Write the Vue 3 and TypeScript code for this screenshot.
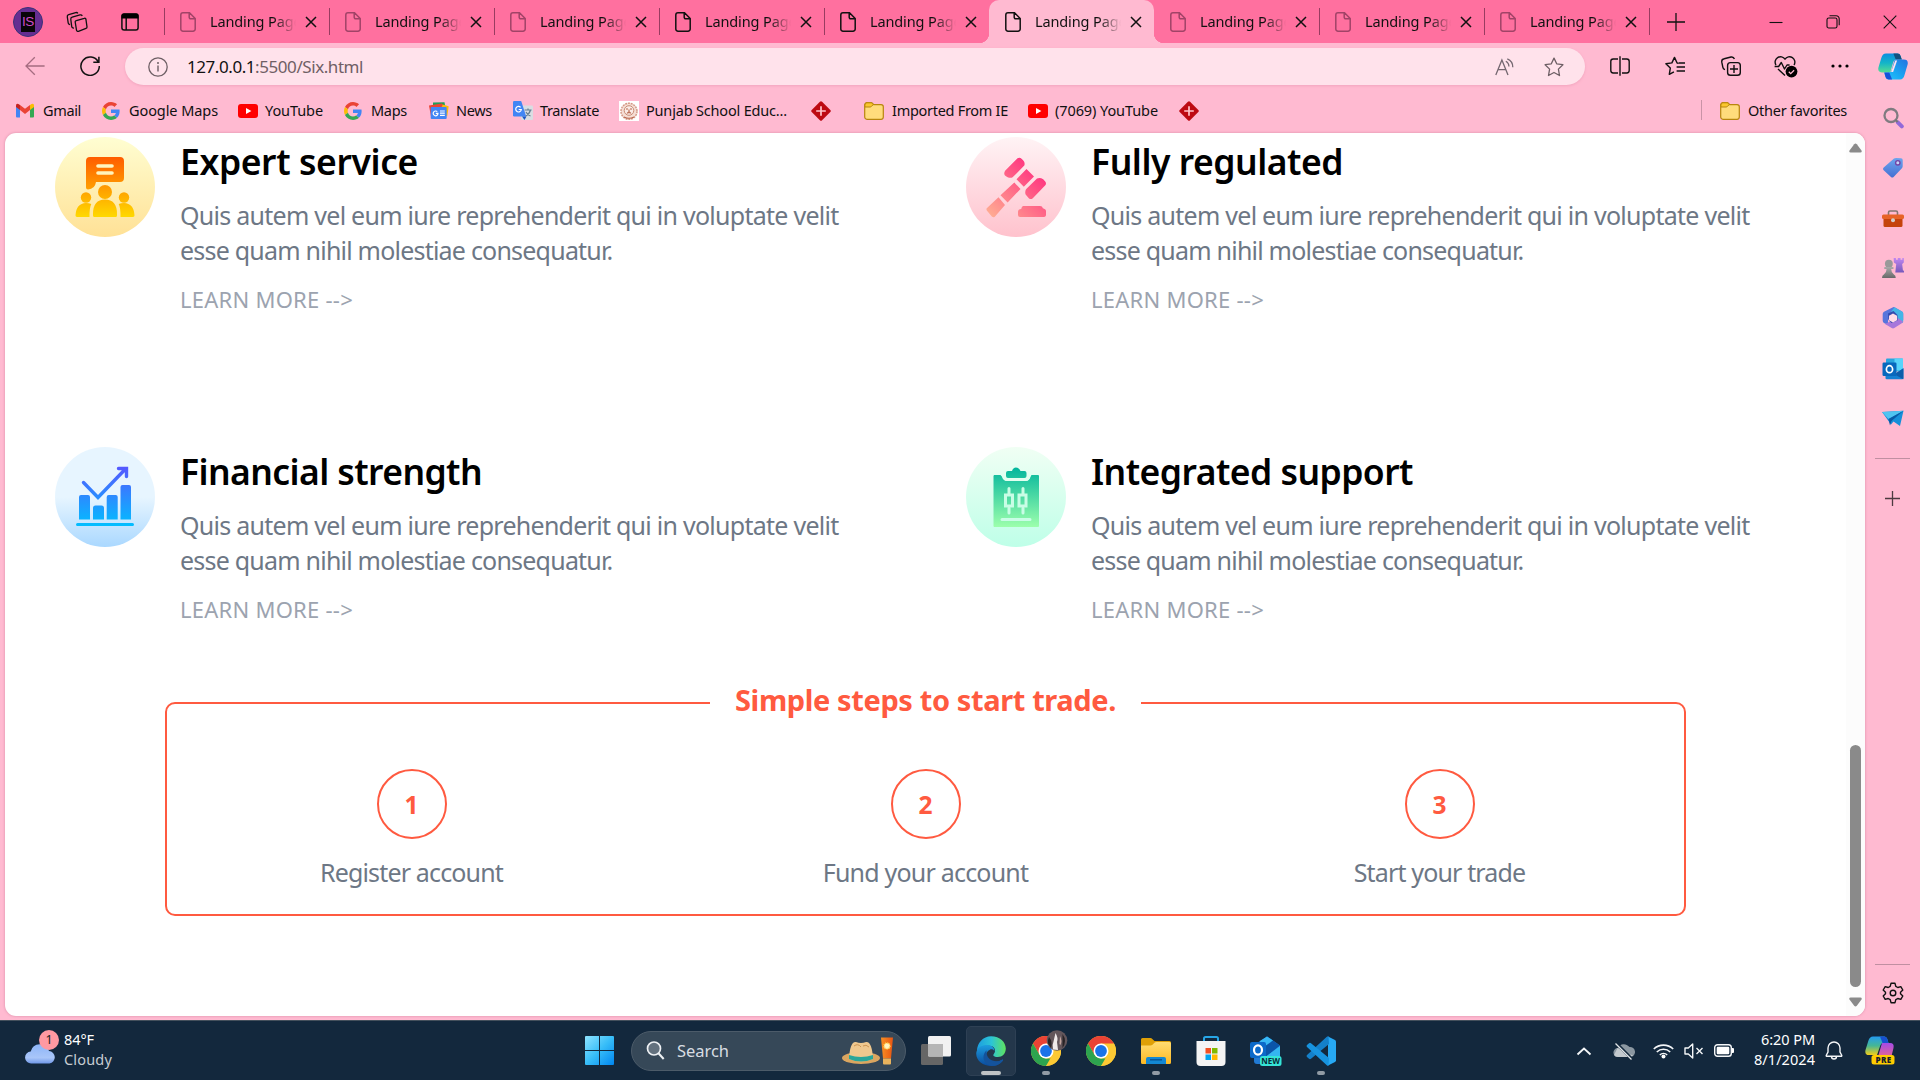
<script setup lang="ts">
import type { Directive } from 'vue'

interface Tab {
  active?: boolean
  loaded?: boolean
  divider: boolean
}
interface Bookmark {
  icon: string
  label: string
  slot: number
  text: number
}
interface Feature {
  icon: string
  title: string
  width: number
}
interface Step {
  label: string
  width: number
}
interface TaskApp {
  icon: string
  state: 'idle' | 'running' | 'focused'
}

// Tracks a single line of text so that it fills the given width in pixels.
const vFit: Directive<HTMLElement, number> = {
  mounted(el, { value }) {
    if (!value) return
    const range = document.createRange()
    range.selectNodeContents(el)
    const natural = range.getBoundingClientRect().width
    const count = (el.textContent ?? '').trim().length
    if (count > 1) el.style.letterSpacing = `${(value - natural) / count}px`
  },
}

const tabs: Tab[] = [
  { divider: true },
  { divider: true },
  { divider: true },
  { divider: true, loaded: true },
  { divider: true, loaded: true },
  { divider: false, loaded: true, active: true },
  { divider: false },
  { divider: true },
  { divider: true },
]

const bookmarks: Bookmark[] = [
  { icon: 'gmail', label: 'Gmail', slot: 86, text: 38 },
  { icon: 'google', label: 'Google Maps', slot: 136, text: 89 },
  { icon: 'youtube', label: 'YouTube', slot: 106, text: 58 },
  { icon: 'google', label: 'Maps', slot: 85, text: 36 },
  { icon: 'news', label: 'News', slot: 84, text: 36 },
  { icon: 'translate', label: 'Translate', slot: 106, text: 59 },
  { icon: 'school', label: 'Punjab School Educ...', slot: 192, text: 141 },
  { icon: 'diamond', label: '', slot: 53, text: 0 },
  { icon: 'folder', label: 'Imported From IE', slot: 164, text: 116 },
  { icon: 'youtube', label: '(7069) YouTube', slot: 151, text: 103 },
  { icon: 'diamond', label: '', slot: 20, text: 0 },
]

const features: Feature[] = [
  { icon: 'f-expert', title: 'Expert service', width: 238 },
  { icon: 'f-regulated', title: 'Fully regulated', width: 252 },
  { icon: 'f-financial', title: 'Financial strength', width: 302 },
  { icon: 'f-support', title: 'Integrated support', width: 322 },
]

const steps: Step[] = [
  { label: 'Register account', width: 183 },
  { label: 'Fund your account', width: 205.5 },
  { label: 'Start your trade', width: 171.5 },
]

const tools = ['split', 'favorites', 'collections', 'heart', 'dots']
const sideApps = ['s-search', 's-tag', 's-toolbox', 's-chess', 's-m365', 's-outlook', 's-send']

const apps: TaskApp[] = [
  { icon: 't-view', state: 'idle' },
  { icon: 't-edge', state: 'focused' },
  { icon: 't-chromeuser', state: 'running' },
  { icon: 't-chrome', state: 'idle' },
  { icon: 't-files', state: 'running' },
  { icon: 't-store', state: 'idle' },
  { icon: 't-outlook', state: 'idle' },
  { icon: 't-code', state: 'running' },
]
</script>

<template>
  <div class="screen">
    <svg class="sprite" width="0" height="0" aria-hidden="true">
      <defs>
        <linearGradient id="gExpBg" x1="0" y1="0" x2="0" y2="1"><stop offset="0" stop-color="#fffed2" /><stop offset="1" stop-color="#ffe196" /></linearGradient>
        <linearGradient id="gExp" gradientUnits="userSpaceOnUse" x1="0" y1="20" x2="0" y2="80"><stop offset="0" stop-color="#ff5c00" /><stop offset="1" stop-color="#ffd900" /></linearGradient>
        <linearGradient id="gRegBg" x1="0" y1="0" x2="0" y2="1"><stop offset="0" stop-color="#fff3f5" /><stop offset="1" stop-color="#ffc2cd" /></linearGradient>
        <linearGradient id="gReg" gradientUnits="userSpaceOnUse" x1="24" y1="80" x2="68" y2="34"><stop offset="0" stop-color="#ffae93" /><stop offset="1" stop-color="#ff3a80" /></linearGradient>
        <linearGradient id="gFinBg" x1="0" y1="0" x2="0" y2="1"><stop offset=".5" stop-color="#e7f5ff" /><stop offset="1" stop-color="#aad8ff" /></linearGradient>
        <linearGradient id="gFin" gradientUnits="userSpaceOnUse" x1="0" y1="20" x2="0" y2="80"><stop offset="0" stop-color="#5558ff" /><stop offset="1" stop-color="#00c0ff" /></linearGradient>
        <linearGradient id="gSupBg" x1="0" y1="0" x2="0" y2="1"><stop offset="0" stop-color="#f0fff4" /><stop offset="1" stop-color="#beffe8" /></linearGradient>
        <linearGradient id="gSup" gradientUnits="userSpaceOnUse" x1="0" y1="20" x2="0" y2="80"><stop offset="0" stop-color="#00b59c" /><stop offset="1" stop-color="#9cffac" /></linearGradient>
        <linearGradient id="gWin" x1="0" y1="0" x2="1" y2="1"><stop offset="0" stop-color="#8fe4ff" /><stop offset=".5" stop-color="#37bdf8" /><stop offset="1" stop-color="#0086f0" /></linearGradient>
        <linearGradient id="gEdgeA" x1="0" y1="0" x2="1" y2="0"><stop offset="0" stop-color="#1c9de0" /><stop offset=".5" stop-color="#2cc4d6" /><stop offset="1" stop-color="#5fe35e" /></linearGradient>
        <linearGradient id="gEdgeB" x1="0" y1="0" x2="0" y2="1"><stop offset="0" stop-color="#1d9de0" /><stop offset="1" stop-color="#0a4a9c" /></linearGradient>
        <linearGradient id="gFolder" x1="0" y1="0" x2="0" y2="1"><stop offset="0" stop-color="#ffdc72" /><stop offset="1" stop-color="#fdb922" /></linearGradient>
        <linearGradient id="gCloud" x1="0" y1="0" x2="0" y2="1"><stop offset="0" stop-color="#8db5f8" /><stop offset=".7" stop-color="#a9c6f9" /><stop offset="1" stop-color="#6f97e8" /></linearGradient>
        <linearGradient id="gCopA" x1="0" y1="0" x2="0" y2="1"><stop offset="0" stop-color="#0a8fe0" /><stop offset=".5" stop-color="#14b5c8" /><stop offset="1" stop-color="#55dd92" /></linearGradient>
        <linearGradient id="gCopB" x1="1" y1="0" x2="0" y2="1"><stop offset="0" stop-color="#2672e0" /><stop offset=".6" stop-color="#18aaf4" /><stop offset="1" stop-color="#2bc4fa" /></linearGradient>
        <linearGradient id="gPreA" x1="0" y1="0" x2="0" y2="1"><stop offset="0" stop-color="#249cf0" /><stop offset=".5" stop-color="#45b795" /><stop offset="1" stop-color="#f2cd19" /></linearGradient>
        <linearGradient id="gPreB" x1="0" y1="0" x2="0" y2="1"><stop offset="0" stop-color="#a44be8" /><stop offset="1" stop-color="#f26a80" /></linearGradient>
        <linearGradient id="gTag" x1="0" y1="0" x2="0" y2="1"><stop offset="0" stop-color="#6da5ee" /><stop offset="1" stop-color="#456fd2" /></linearGradient>
        <linearGradient id="gPurple" x1="0" y1="0" x2="0" y2="1"><stop offset="0" stop-color="#c187f2" /><stop offset="1" stop-color="#7658bb" /></linearGradient>
        <linearGradient id="gGray" x1="0" y1="0" x2="0" y2="1"><stop offset="0" stop-color="#aaa" /><stop offset="1" stop-color="#686868" /></linearGradient>
        <linearGradient id="gSun" x1="0" y1="0" x2="1" y2="0"><stop offset="0" stop-color="#f89024" /><stop offset="1" stop-color="#e85512" /></linearGradient>
      </defs>

      <symbol id="page" viewBox="0 0 16 20"><path d="M3 .8h6.500l5.700 5.700V17A2.200 2.200 0 0 1 13 19.200H3A2.200 2.200 0 0 1 .8 17V3A2.200 2.200 0 0 1 3 .8ZM9.200 1v4.300a1.500 1.500 0 0 0 1.500 1.500H15" fill="none" stroke="currentColor" stroke-width="1.500" /></symbol>
      <symbol id="close" viewBox="0 0 12 12"><path d="m1 1 10 10M11 1 1 11" stroke="currentColor" stroke-width="1.500" /></symbol>
      <symbol id="workspaces" viewBox="0 0 22 22"><g fill="none" stroke="currentColor" stroke-width="1.300" stroke-linejoin="round"><path d="m10.300 8.600 8-2.300a1.200 1.200 0 0 1 1.600.9l1.100 7.600a1.500 1.500 0 0 1-1 1.600l-7.600 2.900a1.400 1.400 0 0 1-1.900-1.100L9.200 10a1.200 1.200 0 0 1 1.100-1.400Z" transform="translate(0 1)" /><path d="m7.800 17.300-.9-.4a2 2 0 0 1-1.200-1.600L4.800 8.500a2 2 0 0 1 1.400-2.300L14 3.900a2 2 0 0 1 2.300 1" /><path d="m4 13.700-.6-.3a2 2 0 0 1-1.200-1.600L1.300 6a2 2 0 0 1 1.400-2.300l7-2.100a2 2 0 0 1 2.200.8" /></g></symbol>
      <symbol id="tabmenu" viewBox="0 0 18 18"><path d="M3.200.9h11.600a2.300 2.300 0 0 1 2.300 2.300v11.600a2.300 2.300 0 0 1-2.300 2.300H3.200A2.300 2.300 0 0 1 .9 14.800V3.200A2.300 2.300 0 0 1 3.200.9ZM5.200 5v12" fill="none" stroke="#111" stroke-width="1.500" /><path d="M.5 5.500v-3a2 2 0 0 1 2-2h13a2 2 0 0 1 2 2v3z" /></symbol>
      <symbol id="back" viewBox="0 0 20 20"><path d="M19.600 10H1M9.800 1.200 1 10l8.800 8.800" fill="none" stroke="#a56c80" stroke-width="1.300" /></symbol>
      <symbol id="refresh" viewBox="0 0 20 20"><path d="M18.200 5.800A9.200 9.200 0 1 0 19.300 10M18.900.8v5.400h-5.600" fill="none" stroke="#111" stroke-width="1.500" /></symbol>
      <symbol id="info" viewBox="0 0 20 20"><circle cx="10" cy="10" r="9.200" fill="none" stroke="#6e5f65" stroke-width="1.300" /><path d="M10 8.600v6" stroke="#6e5f65" stroke-width="1.400" /><circle cx="10" cy="6" r="1" fill="#6e5f65" /></symbol>
      <symbol id="aloud" viewBox="0 0 20 18"><path d="M.8 17 6.900 2 13 17M3 11.600h7.800M10.800 3.200a6 6 0 0 1 3.100 5.400M12.300.8a9 9 0 0 1 5.500 8.400" fill="none" stroke="#746770" stroke-width="1.300" /></symbol>
      <symbol id="star" viewBox="0 0 20 20"><path d="m10 1.100 2.700 5.700 6.200.9-4.500 4.400 1.100 6.400-5.500-3-5.500 3 1.100-6.400L1.100 7.700l6.200-.9z" fill="none" stroke="#6e5f65" stroke-width="1.300" stroke-linejoin="round" /></symbol>
      <symbol id="split" viewBox="0 0 20 20"><path d="M8 3H3.200A2.400 2.400 0 0 0 .8 5.400v9.200A2.400 2.400 0 0 0 3.200 17H8M12 3h4.800a2.400 2.400 0 0 1 2.400 2.400v9.200a2.400 2.400 0 0 1-2.400 2.400H12M10 .3v19.400" fill="none" stroke="#111" stroke-width="1.400" /></symbol>
      <symbol id="favorites" viewBox="0 0 20 20"><path d="m13.800 7.300-1.700-.3L9.500 1.400 6.900 6.900.9 7.800l4.400 4.300-1 6.300 4.600-2.600M11.600 11H20M14 7H20M11.600 15H20" fill="none" stroke="#111" stroke-width="1.400" stroke-linejoin="round" /></symbol>
      <symbol id="collections" viewBox="0 0 20 20"><path d="M4 13.600a3 3 0 0 1-2.200-2.500L.8 6.200a3 3 0 0 1 2.400-3.400L10 1a3 3 0 0 1 3.400 2" fill="none" stroke="#111" stroke-width="1.400" /><rect x="6.600" y="6.600" width="12.700" height="12.700" rx="2.800" fill="none" stroke="#111" stroke-width="1.400" /><path d="M13 9v8M9 13h8" stroke="#111" stroke-width="1.400" /></symbol>
      <symbol id="heart" viewBox="0 0 24 22"><path d="M2 9a5.200 5.200 0 0 1 9-5.800A5.200 5.200 0 0 1 20 9M.6 10.500h4l2.700-4 3.200 6.500 2.500-4h2.600M4 13l7 6.500" fill="none" stroke="#111" stroke-width="1.400" stroke-linejoin="round" /><circle cx="17.500" cy="15.600" r="5.900" /><path d="m14.800 15.800 1.900 1.800 3.400-3.400" fill="none" stroke="#ffbad1" stroke-width="1.300" /></symbol>
      <symbol id="dots" viewBox="0 0 20 20"><circle cx="3" cy="10" r="1.600" /><circle cx="10" cy="10" r="1.600" /><circle cx="17" cy="10" r="1.600" /></symbol>
      <symbol id="copilot" viewBox="0 0 30 27"><path d="M8 .6h11.600q2.200 0 3 2.400l1.200 3.600H18q-2 0-2.800 2.700l-3 10.100H4.500Q-.8 19.400.5 14.200L3.300 5Q4.600.6 8 .6Z" fill="url(#gCopA)" /><path d="M15.400.6h4.200q2.200 0 3 2.400l1.200 3.600h-6.100z" fill="#12517e" /><path d="M22 26.500H10.600q-2.400 0-3.100-2.500l-1.200-4.600h4.200q2.400 0 3.200-2.500l3-10.300h9q5 0 3.900 5l-3 10.100q-1.100 4.800-4.600 4.800Z" fill="url(#gCopB)" /><path d="M6.300 19.400h5l2.800 7H10.600q-2.400 0-3.100-2.400z" fill="#1453d9" /><path d="M17.300 7.600h1.800l-4 11.300h-2z" fill="#ffe2ee" /></symbol>

      <symbol id="gmail" viewBox="0 0 18 14"><path d="M0 2v11q0 1 1 1h3V5z" fill="#4285f4" /><path d="M18 2v11q0 1-1 1h-3V5z" fill="#34a853" /><path d="M14 1.500v5l4-3V2q0-3-4-.5z" fill="#fbbc04" /><path d="M4 1.500v5l-4-3V2q0-3 4-.5z" fill="#c5221f" /><path d="M4 1.600 9 5.300l5-3.700v5l-5 3.800-5-3.800z" fill="#ea4335" /></symbol>
      <symbol id="google" viewBox="0 0 48 48"><path fill="#EA4335" d="M24 9.500c3.540 0 6.710 1.220 9.210 3.600l6.850-6.850C35.900 2.380 30.470 0 24 0 14.620 0 6.510 5.380 2.560 13.220l7.980 6.190C12.430 13.720 17.740 9.500 24 9.500z" /><path fill="#4285F4" d="M46.980 24.550c0-1.570-.15-3.090-.38-4.550H24v9.020h12.940c-.58 2.960-2.260 5.480-4.780 7.180l7.730 6c4.510-4.180 7.090-10.360 7.090-17.650z" /><path fill="#FBBC05" d="M10.530 28.590c-.48-1.450-.76-2.990-.76-4.590s.27-3.140.76-4.590l-7.980-6.190C.92 16.460 0 20.120 0 24c0 3.880.92 7.540 2.560 10.780l7.970-6.190z" /><path fill="#34A853" d="M24 48c6.480 0 11.930-2.130 15.890-5.810l-7.730-6c-2.150 1.450-4.920 2.300-8.160 2.300-6.260 0-11.570-4.220-13.470-9.910l-7.980 6.190C6.510 42.620 14.620 48 24 48z" /></symbol>
      <symbol id="youtube" viewBox="0 0 20 14"><rect width="20" height="14" rx="3" fill="#f00" /><path d="m8 4 5.400 3L8 10z" fill="#fff" /></symbol>
      <symbol id="news" viewBox="0 0 20 17"><path d="m4 .5 11.500-.3 1 6H4z" fill="#1e9e58" /><path d="m0 3.500 13-2 4 5-15 8z" fill="#ea4335" /><path d="m19.700 4.200-6-1.700-2 5 6.500 7z" fill="#fbbc04" /><rect x="1.700" y="5" width="16" height="12" rx="1" fill="#4285f4" /><path d="M8.300 9.700A2.400 2.400 0 1 0 9 11.300H6.800M11 9h4.800M11 11.200h4.800M11 13.400h4.800" fill="none" stroke="#fff" stroke-width="1.200" /></symbol>
      <symbol id="translate" viewBox="0 0 20 20"><rect x="8" y="4.500" width="12" height="14.500" rx="1.200" fill="#d9dde2" /><path d="M11.600 9h7M15 7.400V9M17.500 9q-1 4-5 6M13 11q1.500 3 4.500 4" fill="none" stroke="#657f92" stroke-width="1.200" /><path d="M1.200 0h7l5 15.500h-12Q0 15.500 0 14.300V1.200Q0 0 1.200 0Z" fill="#4285f4" /><path d="M9 15.500h4.500l-2 3.500z" fill="#1a56c4" /><path d="M7.600 6.300A2.800 2.800 0 1 0 8.300 8.500H5.700" fill="none" stroke="#fff" stroke-width="1.200" /></symbol>
      <symbol id="school" viewBox="0 0 20 20"><path d="M0 0h20v20H0z" fill="#fff" /><circle cx="10" cy="10.300" r="8" fill="#f5ded5" stroke="#d49a87" stroke-width="1.500" stroke-dasharray="2 .8" /><circle cx="10" cy="9.500" r="4.800" fill="#faece7" stroke="#c98c75" /><path d="M7 8h2M11 8h2M8 12.500q2-3 4 0M10 8.500v4M5 16q5 2.500 10 0" fill="none" stroke="#b8674d" stroke-width="1.100" /></symbol>
      <symbol id="diamond" viewBox="0 0 20 20"><path d="M8.900.7q1.100-1 2.200 0l8.200 8.200q1 1.100 0 2.200l-8.200 8.200q-1.100 1-2.200 0L.7 11.100q-1-1.100 0-2.200z" fill="#bd0a12" /><path d="M10 5.200v9.600M5.200 10h9.600" stroke="#ffc5cb" stroke-width="1.700" /></symbol>
      <symbol id="folder" viewBox="0 0 20 18"><path d="M.7 3A2.200 2.200 0 0 1 2.900.7h4q1 0 1.700.8l1 1.100h7.500a2.200 2.200 0 0 1 2.200 2.200v10.300a2.200 2.200 0 0 1-2.200 2.200H2.900a2.200 2.200 0 0 1-2.200-2.200z" fill="#ffdc7c" stroke="#b8860e" stroke-width="1.200" /><path d="M.9 3.100Q1 .9 2.900.8h4q1 0 1.600.8l.8 1-1.600 1.500Q7 5 6 5H1z" fill="#fbc72e" stroke="#b8860e" /></symbol>

      <symbol id="f-expert" viewBox="0 0 100 100"><circle cx="50" cy="50" r="50" fill="url(#gExpBg)" /><g fill="url(#gExp)"><path fill-rule="evenodd" d="M35 20h30a4 4 0 0 1 4 4v17a4 4 0 0 1-4 4H41q-1 7-8 7.500-2 0-2-2V24a4 4 0 0 1 4-4Zm8 7.200a1.700 1.700 0 0 0 0 3.600h14a1.700 1.700 0 0 0 0-3.600zm0 7a1.700 1.700 0 0 0 0 3.600h14a1.700 1.700 0 0 0 0-3.600z" /><circle cx="50" cy="55" r="7" /><circle cx="31" cy="60.500" r="5.200" /><circle cx="69" cy="60.500" r="5.200" /><path d="M38 77q0-14.500 12-14.500T62 77v1.500q0 1.500-1.500 1.500h-21q-1.500 0-1.500-1.500zM36.300 67q-2 4-1.800 13H22q-1.600 0-1.500-1.800Q21.200 66.500 31 66q3 0 5.300 1zM63.700 67q2 4 1.800 13H78q1.600 0 1.500-1.800Q78.800 66.500 69 66q-3 0-5.300 1z" /></g></symbol>
      <symbol id="f-regulated" viewBox="0 0 100 100"><circle cx="50" cy="50" r="50" fill="url(#gRegBg)" /><g fill="url(#gReg)"><path d="m51.500 21.300-12.200 12.200q-2.300 3.500.3 5.500l2 1.300q3 1 5 0l11.700-11.700q1-3-1-5l-1.500-1.700q-2-2-4.300-.6zM60.500 32l-10 10.200 7.300 7.600L68 39.500zM71 41.500 60 52.300q-1.300 2.700-.4 5.300l3.200 3.600q2 1.800 4 0l12.500-13q1.500-2-.3-4l-1.800-2q-3.200-2-6.200-.7zM48.300 45.500 34.500 58.200 41.600 65.500 54.500 52zM32.500 60.300 21 71q-1 1-.2 2.500l5 6q1.500 1.400 3 .2L39 68zM57 69h17q3 .2 2.500 2l2.500 1.300q1 .6 1 2v4Q79.700 80 78 80H54q-2 0-2-2v-3q0-3 3.200-3 .5-2.500 1.800-3z" /></g></symbol>
      <symbol id="f-financial" viewBox="0 0 100 100"><circle cx="50" cy="50" r="50" fill="url(#gFinBg)" /><path d="M28.500 35.500 43 50.500l26-27M63.500 21.500h8v8" fill="none" stroke="url(#gFin)" stroke-width="3.400" stroke-linecap="round" /><path d="M24 50q0-2 2-2h7q2 0 2 2v22.500H24zM38 61q0-2.500 2.500-2.500h6Q49 58.500 49 61v11.500H38zM51.700 50q0-2 2-2h7q2 0 2 2v22.500h-11zM65.500 40q0-2 2-2h6.500q2 0 2 2v32.500H65.500zM22.500 76h55a1.500 1.500 0 0 1 0 3h-55a1.500 1.500 0 0 1 0-3z" fill="url(#gFin)" /></symbol>
      <symbol id="f-support" viewBox="0 0 100 100"><circle cx="50" cy="50" r="50" fill="url(#gSupBg)" /><path d="M28 28h6.500l3 3.500q1 2.500 4 2.500h18q3 0 4-2.500l2-3.500H72q1 0 1 1v50q0 1-1 1H28.500q-1 0-1-1V29z" fill="url(#gSup)" /><path d="M37.500 27v1q0 4.500 4 4.500h17.500q4 0 4-4.500v-1" fill="none" stroke="#e2fff0" stroke-width="3" /><path d="M40 26q0-2 2-2h4q1-3.500 4-3.500t4.500 3.500h4q2 0 2 2v3q0 2-2 2H42q-2 0-2-2z" fill="url(#gSup)" /><g fill="none" stroke="#c9fde6" stroke-width="3"><path d="M43 41.500v6M43 61v5M57 41.500v6M57 61v5M36 72.500h28" stroke-linecap="round" /><path d="M39.500 48h7v11h-7zM53 48h7v11h-7z" /></g></symbol>

      <symbol id="s-search" viewBox="0 0 22 22"><circle cx="9" cy="8.500" r="6.500" fill="none" stroke="#807b80" stroke-width="2.300" /><path d="m15.800 15.300 4 4" stroke="#9269d8" stroke-width="4" stroke-linecap="round" /><path d="m13.600 13 2 2" stroke="#777" stroke-width="2" /></symbol>
      <symbol id="s-tag" viewBox="0 0 22 22"><path d="M12 1.600q1-.7 2-.7l5 .3q1.700.2 1.700 1.800v6q0 1.300-.8 2.200l-8.300 8.800q-1.300 1.200-2.600 0L1.400 13q-1-1.300.3-2.500z" fill="url(#gTag)" /><circle cx="15.800" cy="5.800" r="2.200" fill="#c3d5f5" stroke="#7443a5" stroke-width="1.400" /></symbol>
      <symbol id="s-toolbox" viewBox="0 0 22 20"><path d="M6.500 7V4.500Q6.500 3 8 3h6q1.500 0 1.500 1.500V7" fill="none" stroke="#83766f" stroke-width="1.600" /><path d="M1.500 9.500h19v8q0 1.500-1.500 1.500H3q-1.500 0-1.500-1.500z" fill="#c5430c" /><path d="M1.500 6.500h19q1.500 0 1.500 1.500v1.500q0 1.500-1.500 1.500h-19Q0 11 0 9.500V8q0-1.500 1.500-1.500z" fill="#e76327" /><circle cx="11" cy="12.300" r="2" fill="#d3ceca" /></symbol>
      <symbol id="s-chess" viewBox="0 0 24 24"><path d="M12.700 1h2.500v2h2V1h3v2h2V1h1.600v5l-1.800 1.500.8 7q1.500.5 1.500 2.500H14.500l1-9.500L13 6z" fill="url(#gPurple)" /><circle cx="7.500" cy="7.300" r="4.300" fill="#999" /><path d="M2.500 11h10v2.200H10q0 4 3 6 2 .7 2 3.800H0q0-3.100 2-3.800 3-2 3-6H2.500z" fill="url(#gGray)" /></symbol>
      <symbol id="s-m365" viewBox="0 0 22 22"><path d="M10.500.4q1.300-.6 2.500 0l7 4q1.200.7 1.200 2v6.500L13 8 6 12.500V18l-4-2q-1.300-.8-1.300-2.500V7q0-1.500 1.300-2.300z" fill="#5875dc" /><path d="m12.500.2 7.500 4.200q1.200.7 1.200 2v8q0 1-1 1.700l-5-3V9L8.500 5.500z" fill="#44b5e6" /><path d="M21 14.500q-.2 1-1.200 1.700l-7.500 4.800q-1.300.8-2.600 0L3 17l3-1.500 9-5z" fill="#a677db" /><path d="M6 6.500 11.500 4l4 4v5.500l-6 2.500-3-3z" fill="#344bae" /><path d="m11 6.500 4 2.200v4.600l-4 2.200-4-2.200V8.700z" fill="#ffdce8" /></symbol>
      <symbol id="s-outlook" viewBox="0 0 22 22"><path d="M4 1.500Q4 .5 5 .5h15q1 0 1 1v12H4z" fill="#29a6df" /><path d="M12.500.5H21v12h-8.500z" fill="#57d4fb" /><path d="M3.500 10 13 16l8.500-6v10q0 1.300-1.300 1.300H4.800q-1.300 0-1.300-1.300z" fill="#1580d2" /><path d="m21.300 10.500-9 5.700 9 5z" fill="#0d5daa" /><rect x=".5" y="4.500" width="14" height="13.500" rx="1.200" fill="#0868bd" /><ellipse cx="7.500" cy="11.200" rx="3.100" ry="3.500" fill="none" stroke="#fff" stroke-width="1.700" /></symbol>
      <symbol id="s-send" viewBox="0 0 22 17"><path d="M0 1.500 21.500.3 18 15.500 11.500 11 9 14z" fill="#168fd9" /><path d="M0 1.500 21.500.3 6.500 8.500z" fill="#50c4f1" /><path d="M6.500 8.500 21.500.3 9.500 10.500 8 15z" fill="#085aa6" /></symbol>
      <symbol id="gear" viewBox="0 0 22 22"><path d="M9 1.300h4l.8 3.100 2 1.100 3-.9 2 3.400-2.300 2.200v1.600l2.300 2.200-2 3.400-3-.9-2 1.100-.8 3.100H9l-.8-3.100-2-1.100-3 .9-2-3.400 2.300-2.200v-1.600L1.200 8l2-3.400 3 .9 2-1.100z" fill="none" stroke="#111" stroke-width="1.400" stroke-linejoin="round" /><circle cx="11" cy="11" r="2.800" fill="none" stroke="#111" stroke-width="1.400" /></symbol>

      <symbol id="t-view" viewBox="0 0 30 30"><rect y="8" width="22" height="21" rx="1.500" fill="#666" /><rect x="7" width="23" height="20.500" rx="1.500" fill="#f1f1f1" /><path d="M7 8h15v12.500H8.500Q7 20.500 7 19z" fill="#b5b5b5" /></symbol>
      <symbol id="t-edge" viewBox="0 0 30 30"><path d="M1 15A14.500 14.500 0 0 1 15 .2C24 .2 29.800 6 29.800 12.500c0 5-3.500 8.500-8 8.500-4.600 0-5-2-4-3 2.600-3 1.200-8.200-4.800-8.200C7 9.800 3 12.500 1 15Z" fill="url(#gEdgeA)" /><path d="M.3 16.500C1.300 11 6.500 8.800 11 8.900c5 0 7.600 3 7.400 6-1-1.500-3-2-4.500-1.200C7 17 10 26.500 19 26q4-.2 7.500-2.400.8-.2.4.8A15 15 0 0 1 15.500 30C6.500 30-.6 24 .3 16.500Z" fill="url(#gEdgeB)" /><path d="M10.500 14.200C4.500 20.500 8 29.600 17 29.800c4 0 8-2.300 10.100-5.600q.3-1-.8-.5C19.500 27.500 9.500 24 10.500 14.200Z" fill="#14539c" /></symbol>
      <symbol id="t-chrome" viewBox="0 0 30 30"><circle cx="15" cy="15" r="15" fill="#fcc934" /><path d="M2 7.500A15 15 0 0 1 28 7.500H15l-6.500 11.200z" fill="#ea4335" /><path d="M2 7.500 8.500 18.800Q10.600 22 15 22.500h6.400L15 30A15 15 0 0 1 2 7.500Z" fill="#2da44f" /><path d="M15 30 21.500 18.800 21.700 11 28 7.500A15 15 0 0 1 15 30Z" fill="#fcc934" /><circle cx="15" cy="15" r="7.500" fill="#fff" /><circle cx="15" cy="15" r="5.900" fill="#1a73e8" /></symbol>
      <symbol id="t-chromeuser" viewBox="0 0 38 36"><use href="#t-chrome" x="0" y="6" width="30" height="30" /><circle cx="26" cy="10.500" r="10.300" fill="#63565b" /><path d="M24.500 3q3 5 1.500 9l1 8-5-.5q-1-5 .5-8z" fill="#f0eaea" /><path d="M29 6q2.500 5 .5 9l-1-1z" fill="#c5a79f" /><path d="M18 7q4 5 2 11-5-5-2-11zM31.500 4q5 7 0 14z" fill="#282326" /></symbol>
      <symbol id="t-files" viewBox="0 0 30 28"><path d="M0 2.500Q0 1 1.500 1h8q1 0 1.800.9L13.500 4h15Q30 4 30 5.500V10H0z" fill="#dfa007" /><path d="M0 8.500h9.500q1.200 0 2-.8l2-1.900Q14 5 15.500 5h13Q30 5 30 6.500v19q0 1.500-1.500 1.500h-27Q0 27 0 25.500z" fill="url(#gFolder)" /><path d="M5 27v-5q0-2 2-2h16q2 0 2 2v5z" fill="#1388d3" /><path d="M9 22.800h12" stroke="#075393" stroke-width="1.400" /></symbol>
      <symbol id="t-store" viewBox="0 0 30 30"><path d="M8 6V2.500Q8 1 9.500 1h11Q22 1 22 2.500V6" fill="none" stroke="#27a6e6" stroke-width="2" /><path d="M.5 5h29v21q0 4-4 4h-21q-4 0-4-4z" fill="#f4f4f4" /><path d="M9.500 12H15v5.500H9.500z" fill="#f25022" /><path d="M16 12h5.500v5.500H16z" fill="#7fba00" /><path d="M9.500 18.500H15V24H9.500z" fill="#00a4ef" /><path d="M16 18.500h5.500V24H16z" fill="#ffb900" /></symbol>
      <symbol id="t-outlook" viewBox="0 0 32 30"><path d="M4 9 17 .5l13 9V25q0 3-3 3H7q-3 0-3-3z" fill="#217ad4" /><path d="m17 .5 13 9-15 12-7-9z" fill="#0b55a9" /><path d="m10 5 7-4.500 6 4L8 15z" fill="#37b7f4" /><path d="m30 10-20 15h20z" fill="#35b6f0" /><rect y="6" width="16" height="16" rx="2" fill="#0c69c9" /><ellipse cx="8" cy="14" rx="4" ry="4.600" fill="none" stroke="#fff" stroke-width="2.200" /><rect x="10" y="20" width="21.500" height="10" rx="2.500" fill="#35e4d7" /></symbol>
      <symbol id="t-code" viewBox="0 0 30 30"><path d="m22 .5 7 3.400q1 .6 1 1.800v18.600q0 1.200-1 1.800l-7 3.400z" fill="#27a9f4" /><path d="M22.500.3q-1-.3-2 .8L1 19q-1 1 0 2l2 1.800q1 .8 2 0L23 8z" fill="#1480ca" /><path d="M22.500 29.700q-1 .3-2-.8L1 11q-1-1 0-2l2-1.800q1-.8 2 0L23 22z" fill="#1793df" /></symbol>
    </svg>

    <header class="tabstrip">
      <div class="avatar"><span>IS</span></div>
      <svg class="i-work"><use href="#workspaces" /></svg>
      <svg class="i-menu"><use href="#tabmenu" /></svg>
      <div class="tabs">
        <div v-for="(tab, i) in tabs" :key="i" class="tab" :class="{ active: tab.active, loaded: tab.loaded, divider: tab.divider }">
          <svg class="page-icon"><use href="#page" /></svg>
          <span class="tab-title"><span v-fit="91.500">Landing Page</span></span>
          <svg class="tab-close"><use href="#close" /></svg>
        </div>
      </div>
      <svg class="new-tab" viewBox="0 0 18 18"><path d="M9 0v18M0 9h18" stroke="#111" stroke-width="1.300" /></svg>
      <div class="window-buttons">
        <svg viewBox="0 0 14 14"><path d="M.5 7.500h13" stroke="#111" stroke-width="1.100" /></svg>
        <svg viewBox="0 0 14 14"><rect x="1" y="3" width="10" height="10" rx="1.800" fill="none" stroke="#111" stroke-width="1.100" /><path d="M3.500.800h6.700a3 3 0 0 1 3 3v6.500" fill="none" stroke="#111" stroke-width="1.100" /></svg>
        <svg viewBox="0 0 14 14"><path d="m.7.700 12.600 12.600M13.300.700.700 13.300" stroke="#111" stroke-width="1.100" /></svg>
      </div>
    </header>

    <main class="browser">
      <div class="left">
        <div class="toolbar">
          <div class="nav"><svg width="20" height="20"><use href="#back" /></svg></div>
          <div class="nav"><svg width="20" height="20"><use href="#refresh" /></svg></div>
          <div class="address">
            <svg width="20" height="20"><use href="#info" /></svg>
            <div v-fit="176" class="url">127.0.0.1<span>:5500/Six.html</span></div>
            <svg class="aloud" width="20" height="18"><use href="#aloud" /></svg>
            <svg width="20" height="20"><use href="#star" /></svg>
          </div>
          <div class="tools">
            <div v-for="tool in tools" :key="tool" class="tool"><svg :class="tool"><use :href="'#' + tool" /></svg></div>
          </div>
        </div>

        <nav class="bookmarks">
          <div v-for="(b, i) in bookmarks" :key="i" class="bookmark" :style="{ width: b.slot + 'px' }">
            <svg :class="b.icon"><use :href="'#' + b.icon" /></svg>
            <span v-if="b.label" v-fit="b.text">{{ b.label }}</span>
          </div>
          <div class="other">
            <svg class="folder"><use href="#folder" /></svg>
            <span v-fit="99">Other favorites</span>
          </div>
        </nav>

        <div class="viewport">
          <div class="page">
            <section class="features">
              <article v-for="f in features" :key="f.title" class="feature">
                <svg class="feature-icon"><use :href="'#' + f.icon" /></svg>
                <div class="feature-text">
                  <h2><span v-fit="f.width">{{ f.title }}</span></h2>
                  <p>
                    <span v-fit="658.500">Quis autem vel eum iure reprehenderit qui in voluptate velit</span><br />
                    <span v-fit="432.500">esse quam nihil molestiae consequatur.</span>
                  </p>
                  <a><span v-fit="173">LEARN MORE --&gt;</span></a>
                </div>
              </article>
            </section>

            <section class="steps">
              <h3><span v-fit="381">Simple steps to start trade.</span></h3>
              <ol>
                <li v-for="(s, i) in steps" :key="s.label">
                  <b>{{ i + 1 }}</b>
                  <span v-fit="s.width">{{ s.label }}</span>
                </li>
              </ol>
            </section>
          </div>
          <div class="scrollbar">
            <svg width="13" height="10" viewBox="0 0 13 10"><path d="M5.200 1.200q1.300-1.600 2.600 0l4.700 6.300q.8 2-1.200 2H1.700q-2 0-1.200-2z" fill="#8a8a8a" /></svg>
            <div class="thumb"></div>
            <svg width="13" height="10" viewBox="0 0 13 10"><path d="M5.200 8.800q1.300 1.600 2.600 0l4.700-6.300q.8-2-1.200-2H1.700q-2 0-1.200 2z" fill="#8a8a8a" /></svg>
          </div>
        </div>
      </div>

      <aside class="sidebar">
        <div class="copilot"><svg width="30" height="27"><use href="#copilot" /></svg></div>
        <div v-for="s in sideApps" :key="s" class="side-app"><svg width="22" height="22"><use :href="'#' + s" /></svg></div>
        <hr />
        <svg class="side-plus" viewBox="0 0 15 15"><path d="M7.500 0v15M0 7.500h15" stroke="#4c3a40" stroke-width="1.300" /></svg>
        <hr class="bottom" />
        <svg class="gear"><use href="#gear" /></svg>
      </aside>
    </main>

    <footer class="taskbar">
      <div class="weather">
        <div class="cloud">
          <svg width="31" height="21" viewBox="0 0 31 21"><path d="M6.500 20.500a6 6 0 0 1-.8-12A9.500 9.500 0 0 1 24 8a6.300 6.300 0 0 1 .5 12.500z" fill="url(#gCloud)" /></svg>
          <span class="badge">1</span>
        </div>
        <div class="weather-text"><span v-fit="30">84°F</span><span v-fit="48" class="dim">Cloudy</span></div>
      </div>

      <svg class="start" viewBox="0 0 29 29"><path d="M1 0h13v14H0V1q0-1 1-1zM15 0h13q1 0 1 1v13H15zM0 15h14v14H1q-1 0-1-1zM15 15h14v13q0 1-1 1H15z" fill="url(#gWin)" /></svg>
      <div class="search">
        <svg width="19" height="19" viewBox="0 0 19 19"><circle cx="8" cy="7.500" r="6.500" fill="#63717e" stroke="#eef1f4" stroke-width="1.700" /><path d="m12.700 12.500 5 5.500" stroke="#eef1f4" stroke-width="2" /></svg>
        <span v-fit="52">Search</span>
        <svg class="hat" width="51" height="28" viewBox="0 0 51 28"><ellipse cx="19" cy="21" rx="19" ry="6" fill="#dba660" /><path d="M7 22Q8 4 14 5q5 2 10 0 6-1 7 17-12 5-24 0z" fill="#efc88e" /><path d="M7 18q12 4 24 0v4q-12 5-24 0z" fill="#29a69a" /><path d="M12 9q4-3 7 1M21 9q3-2 6 1" fill="none" stroke="#cd9552" /><path d="M39 .500h12l-2 21h-8z" fill="url(#gSun)" /><path d="M41 21.500h8v5q0 1-1 1h-6q-1 0-1-1z" fill="#e9b35d" /><circle cx="45" cy="9" r="3" fill="#fff3c3" stroke="#ffd54d" stroke-width="1.500" stroke-dasharray="1 1" /></svg>
      </div>
      <div class="apps">
        <div v-for="a in apps" :key="a.icon" class="app" :class="a.state">
          <svg :class="a.icon"><use :href="'#' + a.icon" /></svg>
          <span v-if="a.icon === 't-outlook'" class="new">NEW</span>
        </div>
      </div>

      <div class="tray">
        <svg width="16" height="10" viewBox="0 0 16 10"><path d="m1.500 8.500 6.500-6 6.500 6" fill="none" stroke="#f4f6f8" stroke-width="1.800" /></svg>
        <svg class="drive" width="22" height="18" viewBox="0 0 22 18"><path d="M5 15a4.500 4.500 0 0 1-.2-9A7 7 0 0 1 16.500 5 5 5 0 0 1 17.500 15z" fill="#8b97a1" /><path d="m4.500 6 11 6.500L20 13q-1 2-3 2H5Q2 15 1 13z" fill="#c3c9ce" /><path d="m3 1 16 16" stroke="#13283c" stroke-width="3" /><path d="m2.500 1.500 16 16" stroke="#e2e5e8" stroke-width="1.300" /></svg>
        <svg class="wifi" width="21" height="16" viewBox="0 0 21 16"><path d="M.8 6A14 14 0 0 1 20.200 6M3.800 9a9.700 9.700 0 0 1 13.400 0M6.800 12a5.400 5.400 0 0 1 7.400 0" fill="none" stroke="#f4f6f8" stroke-width="1.600" /><circle cx="10.500" cy="13.600" r="2" fill="#fff" /></svg>
        <svg class="volume" width="20" height="16" viewBox="0 0 20 16"><path d="M1 5h3.300L8.700 1v14l-4.400-4H1z" fill="none" stroke="#f4f6f8" stroke-width="1.400" stroke-linejoin="round" /><path d="m12.500 5 6 6M18.500 5l-6 6" stroke="#f4f6f8" stroke-width="1.400" /></svg>
        <svg class="battery" width="20" height="13" viewBox="0 0 20 13"><rect x=".7" y=".7" width="16.600" height="11.600" rx="2.800" fill="none" stroke="#f4f6f8" stroke-width="1.400" /><rect x="2.700" y="2.700" width="12.600" height="7.600" rx="1.200" fill="#fff" /><path d="M18 4h1q1 0 1 1v3q0 1-1 1h-1z" fill="#fff" /></svg>
        <div class="clock"><span v-fit="54">6:20 PM</span><span v-fit="61">8/1/2024</span></div>
        <svg class="bell" width="18" height="19" viewBox="0 0 18 19"><path d="M9 1a6 6 0 0 1 6 6v4l1.700 3.300q.4 1-.7 1H2q-1.100 0-.7-1L3 11V7a6 6 0 0 1 6-6Z" fill="none" stroke="#f4f6f8" stroke-width="1.400" /><path d="M6.500 15.500a2.500 2.500 0 0 0 5 0" fill="none" stroke="#f4f6f8" stroke-width="1.400" /></svg>
        <div class="pre">
          <svg width="30" height="29" viewBox="0 0 30 29"><path d="M8 .500h11.500q2 0 2.800 2.500l1.200 4H18q-2 0-2.700 2.500L12 19H4Q-.5 19 .5 14L3.300 5Q4.500.500 8 .500Z" fill="url(#gPreA)" /><path d="M15 .500h4.500q2 0 2.800 2.500l1.200 4h-6z" fill="#1750cf" /><path d="M17 7h8q4.500 0 3.500 5l-3 12H11l2.500-5z" fill="url(#gPreB)" /><rect x="6.500" y="19" width="23" height="9.500" rx="2.500" fill="#fc0" /></svg>
          <span>PRE</span>
        </div>
      </div>
    </footer>
  </div>
</template>

<style>
body {
  margin: 0;
  overflow: hidden;
}
</style>

<style scoped>
.screen {
  width: 1920px;
  height: 1080px;
  display: flex;
  flex-direction: column;
  overflow: hidden;
  background: #ffbad1;
  color: #111;
  font-family: 'Noto Sans', 'Open Sans', sans-serif;
  font-size: 14.5px;
}
.sprite {
  position: absolute;
}
svg {
  display: block;
  flex: none;
}
span {
  white-space: nowrap;
}

/* Tab strip */
.tabstrip {
  height: 43px;
  flex: none;
  display: flex;
  align-items: center;
  background: #ff709f;
}
.avatar {
  width: 30px;
  height: 30px;
  margin-left: 13px;
  box-sizing: border-box;
  border: 1px solid #3a3277;
  border-radius: 50%;
  background: #652d91;
  display: flex;
  align-items: center;
  justify-content: center;
}
.avatar span {
  padding: 0 1px;
  background: #080508;
  color: #d04cc9;
  font: 13.5px/20px 'Liberation Sans', sans-serif;
  letter-spacing: -0.5px;
}
.i-work {
  width: 22px;
  height: 22px;
  margin-left: 23px;
}
.i-menu {
  width: 18px;
  height: 18px;
  margin-left: 33px;
}
.tabs {
  display: flex;
  align-self: stretch;
  margin-left: 25px;
}
.tab {
  width: 165px;
  box-sizing: border-box;
  display: flex;
  align-items: center;
  padding-left: 15px;
  border-left: 1px solid transparent;
  border-image: linear-gradient(transparent 9px, #983c60 9px, #983c60 34px, transparent 34px) 1;
}
.tab:not(.divider) {
  border-image: none;
}
.tab:last-child {
  width: 166px;
  border-right: 1px solid;
}
.tab.active {
  position: relative;
  background: #ffbad1;
  border-radius: 10px 10px 0 0;
}
.tab.active::before,
.tab.active::after {
  content: '';
  position: absolute;
  bottom: 0;
  width: 10px;
  height: 10px;
}
.tab.active::before {
  left: -11px;
  background: radial-gradient(circle at 0 0, transparent 10px, #ffbad1 10.5px);
}
.tab.active::after {
  right: -10px;
  background: radial-gradient(circle at 100% 0, transparent 10px, #ffbad1 10.5px);
}
.page-icon {
  width: 16px;
  height: 20px;
  color: #a14367;
  margin-top: 1px;
}
.loaded .page-icon {
  color: #111;
}
.tab-title {
  width: 86px;
  margin: -2px 0 0 14px;
  overflow: hidden;
  mask-image: linear-gradient(90deg, #000 64px, transparent 86px);
}
.tab-close {
  width: 12px;
  height: 12px;
  margin-left: 9px;
}
.new-tab {
  width: 18px;
  height: 18px;
  margin-left: 17px;
}
.window-buttons {
  display: flex;
  gap: 43px;
  margin-left: 84px;
}
.window-buttons svg {
  width: 14px;
  height: 14px;
}

/* Browser chrome */
.browser {
  height: 977px;
  flex: none;
  display: flex;
}
.left {
  width: 1866px;
  display: flex;
  flex-direction: column;
}
.toolbar {
  height: 46px;
  display: flex;
  align-items: center;
  padding-left: 7px;
}
.nav {
  width: 55px;
  display: flex;
  justify-content: center;
}
.address {
  width: 1460px;
  height: 37px;
  box-sizing: border-box;
  margin: 1px 0 0 8px;
  padding: 0 21px 0 23px;
  border-radius: 19px;
  background: #ffe2eb;
  box-shadow: 0 1px 3px #f2a5be;
  display: flex;
  align-items: center;
}
.url {
  margin: 0 auto 0 19px;
  font-size: 17px;
  white-space: nowrap;
}
.url span {
  color: #705f65;
}
.aloud {
  margin-right: 29px;
}
.tools {
  display: flex;
  margin: 2px 0 0 7px;
}
.tool {
  width: 55.5px;
  display: flex;
  justify-content: center;
}
.tool:last-child {
  width: 52px;
}
.tool svg {
  width: 20px;
  height: 20px;
}
.tool svg.heart {
  width: 24px;
  height: 22px;
}
.bookmarks {
  height: 44px;
  display: flex;
  align-items: center;
  padding-left: 16px;
}
.bookmark {
  display: flex;
  align-items: center;
  gap: 7px;
  height: 42px;
}
.bookmark span,
.other span {
  margin-top: -3px;
}
.bookmark svg,
.other svg {
  width: 20px;
  height: 20px;
  margin-top: -1px;
}
.bookmark svg.gmail {
  width: 18px;
  height: 15px;
  margin-right: 2px;
}
.bookmark svg.google {
  width: 18px;
  height: 18px;
  margin-right: 2px;
}
.bookmark svg.youtube {
  height: 14px;
}
.bookmark svg.news {
  height: 17px;
}
.bookmark svg.folder,
.other svg {
  height: 18px;
}
.bookmark svg.folder {
  margin-right: 1px;
}
.other {
  margin: -2px 19px 0 auto;
  height: 20px;
  padding-left: 18px;
  border-left: 1px solid #c993a6;
  display: flex;
  align-items: center;
  gap: 8px;
}
.other svg {
  margin-top: 2px;
}
.other span {
  margin-top: 0;
}

/* Web page */
.viewport {
  width: 1860px;
  height: 883px;
  margin-left: 5px;
  display: flex;
  overflow: hidden;
  border-radius: 11px;
  background: #fff;
  box-shadow: 0 0 3px #d98ba5;
}
.page {
  width: 1841px;
  height: 100%;
}
.features {
  display: grid;
  grid-template-columns: 911px 1fr;
  grid-auto-rows: 310px;
  padding: 4px 0 0 50px;
}
.feature {
  display: flex;
  gap: 25px;
}
.feature-icon {
  width: 100px;
  height: 100px;
}
h2,
h3,
p,
ol {
  margin: 0;
}
h2 {
  color: #000;
  font-size: 35.5px;
  line-height: 48px;
  font-weight: 600;
}
p {
  margin-top: 13px;
  color: #6d7785;
  font-size: 25px;
  line-height: 35.2px;
}
a {
  display: block;
  margin-top: 16px;
  color: #9ca3af;
  font-size: 22px;
  line-height: 30px;
}
.steps {
  width: 1521px;
  height: 214px;
  box-sizing: border-box;
  margin: -55px 0 0 160px;
  border: 2px solid #ff5a40;
  border-radius: 10px;
}
h3 {
  width: 431px;
  margin: -24px auto 0;
  background: #fff;
  color: #ff5a40;
  text-align: center;
  font-size: 29px;
  line-height: 40px;
}
ol {
  display: flex;
  gap: 34px;
  width: 1508px;
  margin: 49px 0 0 4.5px;
  padding: 0;
  list-style: none;
}
li {
  width: 480px;
  display: flex;
  flex-direction: column;
  align-items: center;
  gap: 16px;
  color: #6d7785;
  font-size: 25px;
  line-height: 34px;
}
li b {
  width: 70px;
  height: 70px;
  box-sizing: border-box;
  border: 2px solid #ff5a40;
  border-radius: 50%;
  color: #ff5a40;
  font-size: 24.5px;
  line-height: 68px;
  text-align: center;
}
.scrollbar {
  width: 19px;
  box-sizing: border-box;
  padding: 10px 0 9px;
  background: #fcfcfc;
  display: flex;
  flex-direction: column;
  align-items: center;
}
.thumb {
  width: 11px;
  height: 242px;
  margin: auto 0 10px;
  border-radius: 6px;
  background: #8a8a8a;
}

/* Edge sidebar */
.sidebar {
  width: 54px;
  display: flex;
  flex-direction: column;
  align-items: center;
}
.copilot {
  height: 46px;
  display: flex;
  align-items: center;
}
.side-app {
  height: 50.1px;
  margin-right: 1px;
  display: flex;
  align-items: center;
}
.copilot + .side-app {
  margin-top: 4px;
}
hr {
  width: 35px;
  height: 1px;
  margin: 14px 1px 0 0;
  border: 0;
  background: #c08fa1;
}
.side-plus {
  width: 15px;
  height: 15px;
  margin: 32px 2px 0 0;
}
hr.bottom {
  margin-top: auto;
}
.gear {
  width: 22px;
  height: 22px;
  margin: 17px 1px 16px 0;
}

/* Taskbar */
.taskbar {
  height: 60px;
  box-sizing: border-box;
  flex: none;
  display: flex;
  align-items: center;
  border-top: 1px solid #44505c;
  background: #13283d;
  color: #fff;
}
.weather {
  width: 560px;
  margin-left: 25px;
  display: flex;
}
.cloud {
  width: 31px;
  padding-top: 10px;
  position: relative;
}
.badge {
  position: absolute;
  left: 14px;
  top: -3px;
  width: 20px;
  height: 20px;
  border-radius: 50%;
  background: #ff99a2;
  color: #222;
  font-size: 12.5px;
  line-height: 20px;
  text-align: center;
}
.weather-text,
.clock {
  display: flex;
  flex-direction: column;
  margin-top: -4px;
  line-height: 20px;
}
.weather-text {
  margin-left: 8px;
}
.dim {
  color: #c6ccd2;
}
.start {
  width: 29px;
  height: 29px;
}
.search {
  width: 275px;
  height: 40px;
  box-sizing: border-box;
  margin-left: 17px;
  padding: 0 12px 0 14px;
  border: 1px solid #4c5b69;
  border-radius: 20px;
  background: #364858;
  display: flex;
  align-items: center;
  color: #d8dde2;
  font-size: 16.5px;
}
.search span {
  margin: -1px 0 0 12px;
}
.hat {
  margin-left: auto;
}
.apps {
  display: flex;
  gap: 5px;
  margin-left: 5px;
}
.app {
  width: 50px;
  height: 50px;
  box-sizing: border-box;
  border: 1px solid transparent;
  border-radius: 5px;
  position: relative;
  display: flex;
  align-items: center;
  justify-content: center;
}
.app svg {
  width: 30px;
  height: 30px;
}
.app svg.t-chromeuser {
  width: 38px;
  height: 36px;
  margin: -6px -8px 0 0;
}
.app svg.t-outlook {
  width: 32px;
}
.new {
  position: absolute;
  left: 18px;
  top: 29px;
  width: 21px;
  color: #082c38;
  font: 700 8px/10px 'Open Sans', sans-serif;
  text-align: center;
}
.app.focused {
  background: #24374b;
  border-color: #2e4054;
}
.running::after,
.focused::after {
  content: '';
  position: absolute;
  left: 20px;
  bottom: 0;
  width: 8px;
  height: 4px;
  border-radius: 2px;
  background: #919ba5;
}
.focused::after {
  left: 14px;
  width: 20px;
  background: #bfc3c6;
}
.tray {
  display: flex;
  align-items: center;
  margin-left: 230px;
}
.drive {
  margin-left: 21px;
}
.wifi {
  margin-left: 18px;
}
.volume {
  margin-left: 10px;
}
.battery {
  margin-left: 10px;
}
.clock {
  width: 61px;
  margin-left: 20px;
  align-items: flex-end;
}
.bell {
  margin-left: 10px;
}
.pre {
  position: relative;
  margin-left: 22px;
}
.pre span {
  position: absolute;
  left: 7px;
  top: 19px;
  width: 23px;
  color: #17202a;
  font: 800 8px/10px 'Open Sans', sans-serif;
  letter-spacing: 0.4px;
  text-align: center;
}
</style>
